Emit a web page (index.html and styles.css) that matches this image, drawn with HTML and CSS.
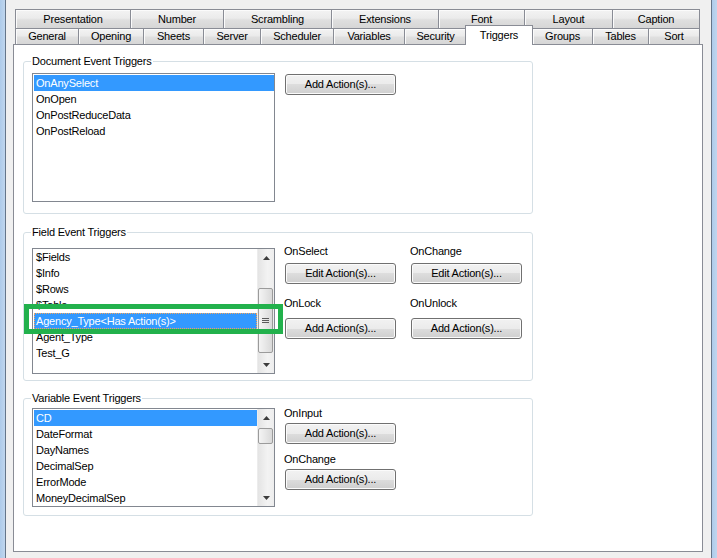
FILE: index.html
```html
<!DOCTYPE html>
<html>
<head>
<meta charset="utf-8">
<title>Document Properties - Triggers</title>
<link rel="stylesheet" href="styles.css">
</head>
<body>
<div class="window">
  <div class="frame frame-left"></div>
  <div class="client">
    <div class="tabs">
      <div class="tab-row row-back">
        <div class="tab">Presentation</div>
        <div class="tab">Number</div>
        <div class="tab">Scrambling</div>
        <div class="tab">Extensions</div>
        <div class="tab">Font</div>
        <div class="tab">Layout</div>
        <div class="tab">Caption</div>
      </div>
      <div class="tab-row row-front">
        <div class="tab">General</div>
        <div class="tab">Opening</div>
        <div class="tab">Sheets</div>
        <div class="tab">Server</div>
        <div class="tab">Scheduler</div>
        <div class="tab">Variables</div>
        <div class="tab">Security</div>
        <div class="tab selected">Triggers</div>
        <div class="tab">Groups</div>
        <div class="tab">Tables</div>
        <div class="tab">Sort</div>
      </div>
    </div>

    <div class="panel">
      <div class="group group-doc">
        <span class="legend">Document Event Triggers</span>
        <div class="listbox lb-doc">
          <ul class="items">
            <li class="item sel">OnAnySelect</li>
            <li class="item">OnOpen</li>
            <li class="item">OnPostReduceData</li>
            <li class="item">OnPostReload</li>
          </ul>
        </div>
        <div class="actions actions-doc">
          <button class="btn">Add Action(s)...</button>
        </div>
      </div>

      <div class="group group-field">
        <span class="legend">Field Event Triggers</span>
        <div class="listbox lb-field">
          <ul class="items">
            <li class="item">$Fields</li>
            <li class="item">$Info</li>
            <li class="item">$Rows</li>
            <li class="item">$Table</li>
            <li class="item sel focus">Agency_Type&lt;Has Action(s)&gt;</li>
            <li class="item">Agent_Type</li>
            <li class="item">Test_G</li>
          </ul>
          <div class="vscroll">
            <div class="sb-btn"><svg width="7" height="4" viewBox="0 0 7 4"><polygon points="0,4 7,4 3.5,0" fill="#3c3c3c"/></svg></div>
            <div class="sb-track">
              <div class="thumb thumb-field"><span class="grip"></span></div>
            </div>
            <div class="sb-btn"><svg width="7" height="4" viewBox="0 0 7 4"><polygon points="0,0 7,0 3.5,4" fill="#3c3c3c"/></svg></div>
          </div>
        </div>
        <div class="actions-grid">
          <div class="cell">
            <div class="lbl">OnSelect</div>
            <button class="btn">Edit Action(s)...</button>
          </div>
          <div class="cell">
            <div class="lbl">OnChange</div>
            <button class="btn">Edit Action(s)...</button>
          </div>
          <div class="cell">
            <div class="lbl lbl-far">OnLock</div>
            <button class="btn">Add Action(s)...</button>
          </div>
          <div class="cell">
            <div class="lbl lbl-far">OnUnlock</div>
            <button class="btn">Add Action(s)...</button>
          </div>
        </div>
        <div class="highlight"></div>
      </div>

      <div class="group group-var">
        <span class="legend">Variable Event Triggers</span>
        <div class="listbox lb-var">
          <ul class="items">
            <li class="item sel">CD</li>
            <li class="item">DateFormat</li>
            <li class="item">DayNames</li>
            <li class="item">DecimalSep</li>
            <li class="item">ErrorMode</li>
            <li class="item">MoneyDecimalSep</li>
          </ul>
          <div class="vscroll">
            <div class="sb-btn"><svg width="7" height="4" viewBox="0 0 7 4"><polygon points="0,4 7,4 3.5,0" fill="#3c3c3c"/></svg></div>
            <div class="sb-track">
              <div class="thumb thumb-var"></div>
            </div>
            <div class="sb-btn"><svg width="7" height="4" viewBox="0 0 7 4"><polygon points="0,0 7,0 3.5,4" fill="#3c3c3c"/></svg></div>
          </div>
        </div>
        <div class="actions actions-var">
          <div class="lbl">OnInput</div>
          <button class="btn">Add Action(s)...</button>
          <div class="lbl lbl-second">OnChange</div>
          <button class="btn">Add Action(s)...</button>
        </div>
      </div>
    </div>
  </div>
  <div class="frame frame-right"></div>
</div>
</body>
</html>
```

FILE: styles.css
```css
* { box-sizing: border-box; }

html, body {
  margin: 0;
  padding: 0;
}

body {
  width: 717px;
  height: 558px;
  overflow: hidden;
  background: #f0f0f0;
  font-family: "Liberation Sans", Arial, sans-serif;
  font-size: 11px;
  letter-spacing: -0.2px;
  color: #000;
}

.window {
  display: flex;
  height: 558px;
}

.frame {
  width: 6px;
  flex: none;
  background: linear-gradient(to right, #aecbea, #c0d6ee);
}

.frame-left { border-right: 1px solid #65768a; }
.frame-right { border-left: 1px solid #65768a; }

.client {
  flex: 1;
  padding-top: 9px;
  background: #f0f0f0;
}

/* ---------- tabs ---------- */
.tabs {
  margin-left: 9px;
  width: 685px;
}

.tab-row { display: grid; }

.row-back {
  grid-template-columns: 115px 93px 108px 107px 86px 88px 88px;
  height: 19px;
}

.row-front {
  grid-template-columns: 63px 65px 60px 57px 73px 71px 62px 66px 60px 56px 52px;
  height: 16px;
}

.tab {
  border-top: 1px solid #898c95;
  border-left: 1px solid #898c95;
  background: linear-gradient(#f3f3f3 0%, #ebebeb 45%, #dfdfdf 55%, #d6d6d6 100%);
  box-shadow: inset 1px 1px 0 #fbfbfb;
  display: flex;
  align-items: center;
  justify-content: center;
  white-space: nowrap;
  line-height: 13px;
}

.tab:last-child { border-right: 1px solid #898c95; }

.tab.selected {
  position: relative;
  z-index: 1;
  margin: -3px -1px -1px -1px;
  background: #fff;
  box-shadow: none;
  border-right: 1px solid #898c95;
}

/* ---------- panel ---------- */
.panel {
  margin-left: 7px;
  width: 690px;
  height: 508px;
  background: #fff;
  border: 1px solid #898c95;
  padding: 16px 0 0 9px;
  display: flex;
  flex-direction: column;
}

.group {
  position: relative;
  flex: none;
  width: 510px;
  border: 1px solid #d5dfe5;
  border-radius: 3px;
  display: flex;
  align-items: flex-start;
  gap: 10px;
  padding-left: 8px;
}

.group-doc { height: 153px; padding-top: 11px; }
.group-field { height: 149px; padding-top: 15px; margin-top: 18px; }
.group-var { height: 118px; padding-top: 9px; margin-top: 17px; }

.legend {
  position: absolute;
  top: -7px;
  left: 7px;
  padding: 0 1px;
  background: #fff;
  line-height: 13px;
  white-space: nowrap;
}

/* ---------- list boxes ---------- */
.listbox {
  flex: none;
  width: 243px;
  border: 1px solid #828790;
  background: #fff;
  display: flex;
  overflow: hidden;
}

.lb-doc { height: 129px; }
.lb-field { height: 126px; }
.lb-var { height: 99px; }

.items {
  list-style: none;
  margin: 0;
  padding: 1px 0 0 1px;
  flex: 1;
  min-width: 0;
  overflow: hidden;
}

.lb-field .items { padding-top: 0; }

.item {
  height: 16px;
  line-height: 16px;
  padding-left: 2px;
  white-space: nowrap;
}

.item.sel {
  background: #3399ff;
  color: #fff;
}

.item.focus {
  outline: 1px dotted #f5a55a;
  outline-offset: -1px;
}

/* ---------- scroll bars ---------- */
.vscroll {
  width: 17px;
  flex: none;
  display: flex;
  flex-direction: column;
  background: linear-gradient(to right, #e4e4e4, #f3f3f3 60%, #ededed);
  border-left: 1px solid #ececec;
}

.sb-btn {
  height: 17px;
  flex: none;
  display: flex;
  align-items: center;
  justify-content: center;
}

.sb-track { flex: 1; }

.thumb {
  margin: 0 1px 0 0;
  border: 1px solid #9b9b9b;
  border-radius: 2px;
  background: linear-gradient(to right, #f4f4f4, #e7e7e7 50%, #d9d9d9);
  display: flex;
  align-items: center;
  justify-content: center;
}

.thumb-field { margin-top: 22px; height: 65px; }
.thumb-var { margin-top: 2px; height: 16px; }

.grip {
  width: 7px;
  height: 5px;
  background: repeating-linear-gradient(#5a5a5a 0 1px, transparent 1px 2px);
}

/* ---------- actions ---------- */
.actions {
  display: flex;
  flex-direction: column;
  align-items: flex-start;
}

.actions-doc { margin-top: 1px; }
.actions-var { margin-top: -1px; }

.actions-grid {
  display: grid;
  grid-template-columns: 111px 111px;
  column-gap: 15px;
  row-gap: 13px;
  margin-top: -3px;
}

.cell {
  display: flex;
  flex-direction: column;
  align-items: flex-start;
}

.lbl {
  line-height: 13px;
  margin-left: -1px;
  margin-bottom: 5px;
  white-space: nowrap;
}

.lbl-far { margin-bottom: 8px; }

.actions-var .lbl { margin-bottom: 3px; }
.actions-var .lbl-second { margin-top: 9px; }

.btn {
  width: 111px;
  height: 21px;
  padding: 0;
  border: 1px solid #707070;
  border-radius: 3px;
  background: linear-gradient(#f2f2f2 0%, #ebebeb 50%, #dddddd 50%, #cfcfcf 100%);
  box-shadow: inset 0 0 0 1px #fbfbfb;
  font: inherit;
  letter-spacing: inherit;
  color: #000;
  line-height: 13px;
}

/* ---------- annotation ---------- */
.highlight {
  position: absolute;
  left: 0;
  top: 71px;
  width: 259px;
  height: 30px;
  border: 5px solid #22b14c;
  pointer-events: none;
}
```
